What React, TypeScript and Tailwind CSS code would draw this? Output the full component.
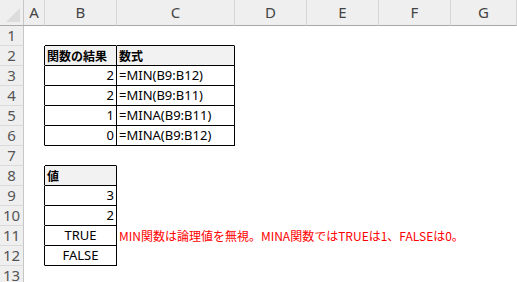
import React from "react";

type Cell = {
  text: string;
  align?: "left" | "right" | "center";
  head?: boolean;
  red?: boolean;
};

const cols = ["A", "B", "C", "D", "E", "F", "G"];
const rows = [1, 2, 3, 4, 5, 6, 7, 8, 9, 10, 11, 12, 13];

const data: Record<string, Cell> = {
  "2B": { text: "関数の結果", head: true },
  "2C": { text: "数式", head: true },
  "3B": { text: "2", align: "right" },
  "3C": { text: "=MIN(B9:B12)" },
  "4B": { text: "2", align: "right" },
  "4C": { text: "=MIN(B9:B11)" },
  "5B": { text: "1", align: "right" },
  "5C": { text: "=MINA(B9:B11)" },
  "6B": { text: "0", align: "right" },
  "6C": { text: "=MINA(B9:B12)" },
  "8B": { text: "値", head: true },
  "9B": { text: "3", align: "right" },
  "10B": { text: "2", align: "right" },
  "11B": { text: "TRUE", align: "center" },
  "12B": { text: "FALSE", align: "center" },
  "11C": { text: "MIN関数は論理値を無視。MINA関数ではTRUEは1、FALSEは0。", red: true },
};

// cells that carry the black table borders
const boxed = (r: number, c: string) =>
  (r >= 2 && r <= 6 && (c === "B" || c === "C")) || (r >= 8 && r <= 12 && c === "B");

const next = (c: string) => cols[cols.indexOf(c) + 1] ?? "";

function Corner() {
  return (
    <div className="bg-[#efefef] border-r border-b border-r-[#c6c6c6] border-b-[#a9a9a9] relative">
      <svg width="24" height="26" className="absolute left-0 top-0">
        <polygon points="20,8 20,22 6,22" fill="#dcdcdc" />
      </svg>
    </div>
  );
}

export default function App() {
  return (
    <div className="w-[517px] h-[282px] overflow-hidden bg-white">
      <div className="grid grid-cols-[24px_21px_72px_118px_72px_72px_72px_1fr] grid-rows-[26px_repeat(13,20px)]">
        <Corner />
        {cols.map((c) => (
          <div
            key={c}
            className="bg-[#efefef] border-r border-b border-r-[#d6d6d6] border-b-[#a9a9a9] flex items-center justify-center text-[15px] text-[#444] font-['Noto_Sans',sans-serif]"
          >
            {c}
          </div>
        ))}

        {rows.map((r) => (
          <React.Fragment key={r}>
            <div className="bg-[#efefef] border-r border-b border-r-[#c6c6c6] border-b-[#dadada] flex items-center justify-center text-[15px] text-[#555] font-['Noto_Sans',sans-serif]">
              {r}
            </div>
            {cols.map((c) => {
              const cell = data[`${r}${c}`];
              const right = boxed(r, c) || boxed(r, next(c));
              const bottom = boxed(r, c) || boxed(r + 1, c);
              return (
                <div
                  key={c}
                  className={`relative border-r border-b flex items-center px-[2px] pt-px whitespace-nowrap ${
                    right ? "border-r-black" : "border-r-transparent"
                  } ${bottom ? "border-b-black" : "border-b-transparent"} ${
                    cell?.head ? "bg-[#f2f2f2]" : ""
                  } ${
                    cell?.align === "right"
                      ? "justify-end"
                      : cell?.align === "center"
                      ? "justify-center"
                      : "justify-start"
                  }`}
                >
                  {cell &&
                    (cell.head ? (
                      <span className="text-[12px] font-bold text-black font-['Noto_Sans_CJK_JP',sans-serif]">
                        {cell.text}
                      </span>
                    ) : cell.red ? (
                      <span className="text-[12px] text-[#ff0000] font-['Noto_Sans_CJK_JP',sans-serif]">
                        {cell.text}
                      </span>
                    ) : (
                      <span className="text-[13px] text-black font-['Noto_Sans','Noto_Sans_CJK_JP',sans-serif]">
                        {cell.text}
                      </span>
                    ))}
                </div>
              );
            })}
          </React.Fragment>
        ))}
      </div>
    </div>
  );
}
